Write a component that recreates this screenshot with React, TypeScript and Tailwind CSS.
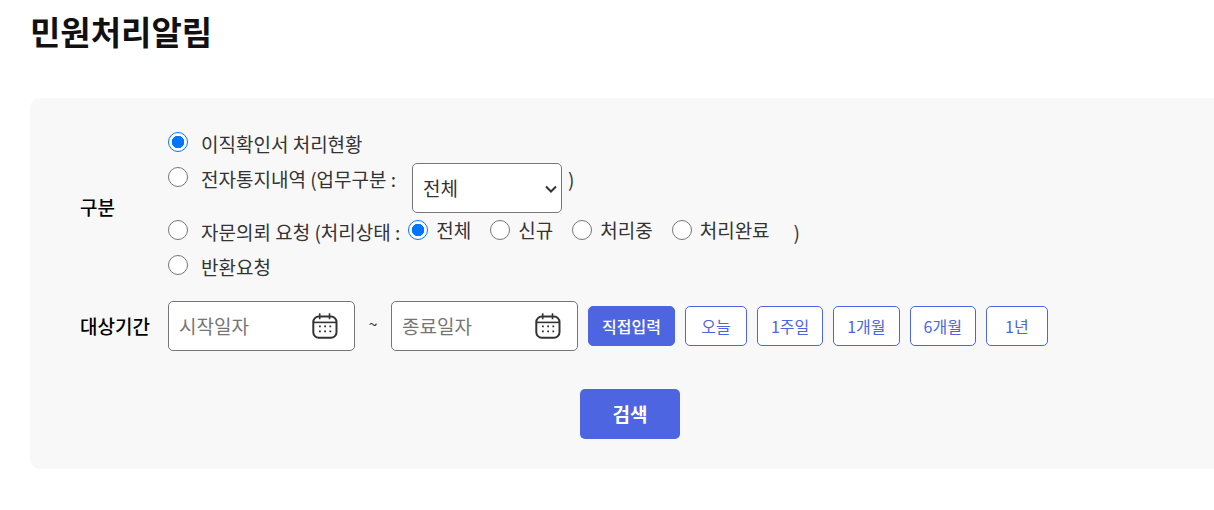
import React, { useState } from 'react'

/** 업무구분 목록 */
const TASK_TYPES = ['전체']

/** 처리상태 목록 */
const STATUSES = ['전체', '신규', '처리중', '처리완료']

/** 대상기간 빠른 선택 목록 */
const PERIODS = ['직접입력', '오늘', '1주일', '1개월', '6개월', '1년']

const radioClass =
  "appearance-none shrink-0 size-5 rounded-full border border-[#767676] bg-white checked:border-[#0075ff] checked:bg-[radial-gradient(circle,#0075ff_6px,#ffffff_6.5px)]"

interface KindRadioProps {
  id: string
  label: string
  value: string
  onChange: (id: string) => void
}

/** 구분 라디오 버튼 + 라벨 */
const KindRadio: React.FC<KindRadioProps> = ({ id, label, value, onChange }) => (
  <>
    <div className="flex h-[34px] items-center">
      <input
        type="radio"
        name="kind"
        id={id}
        checked={value === id}
        onChange={() => onChange(id)}
        className={radioClass}
      />
    </div>
    <label htmlFor={id} className="ml-[13px] h-[35px] pt-px leading-[35px] whitespace-nowrap">
      {label}
    </label>
  </>
)

const CalendarIcon: React.FC = () => (
  <svg width="28" height="28" viewBox="0 0 28 28" fill="none" stroke="#333333" strokeWidth="2" aria-hidden="true">
    <rect x="2.3" y="4.5" width="23.2" height="21.2" rx="5.5" />
    <path d="M2.3 10.4H25.5" strokeWidth="1.6" />
    <path d="M8.7 1.2V7.2M18.5 1.2V7.2" strokeWidth="1.6" />
    <g fill="#333333" stroke="none">
      <path d="M8 13.5h1.8v1.8H8zM13.2 13.5H15v1.8h-1.8zM18.4 13.5h1.8v1.8h-1.8zM8 18.5h1.8v1.8H8zM13.2 18.5H15v1.8h-1.8zM18.4 18.5h1.8v1.8h-1.8z" />
    </g>
  </svg>
)

interface DateFieldProps {
  label: string
}

/** 날짜 입력 필드 */
const DateField: React.FC<DateFieldProps> = ({ label }) => (
  <div className="flex h-[50px] w-[187px] items-center rounded-[5px] border border-[#767676] bg-white pr-[15px] pl-[10px]">
    <input
      type="text"
      aria-label={label}
      placeholder={label}
      className="min-w-0 flex-1 bg-transparent outline-none placeholder:text-[#757575]"
    />
    <button type="button" aria-label={`${label} 선택`}>
      <CalendarIcon />
    </button>
  </div>
)

export default function App() {
  const [kind, setKind] = useState('confirm')
  const [status, setStatus] = useState('전체')
  const [period, setPeriod] = useState('직접입력')

  return (
    <main className="overflow-x-hidden pt-[7px] pb-10 pl-[30px] font-['Noto_Sans_CJK_KR',sans-serif] text-[19px] text-[#333333]">
      <h1 className="text-[33px] leading-[48px] font-bold text-[#111111]">민원처리알림</h1>

      <form
        className="mt-[43px] -mr-4 rounded-[10px] bg-[#f8f8f8] px-[50px] pt-[27px] pb-[30px]"
        onSubmit={(e) => e.preventDefault()}
      >
        {/* 구분 */}
        <div className="flex items-center" role="radiogroup" aria-label="구분">
          <div className="w-[88px] shrink-0 pt-1.5 font-medium text-black">구분</div>
          <div>
            <div className="flex">
              <KindRadio id="confirm" label="이직확인서 처리현황" value={kind} onChange={setKind} />
            </div>

            <div className="flex">
              <KindRadio id="notice" label="전자통지내역 (업무구분 :" value={kind} onChange={setKind} />
              <div className="relative mt-[3px] ml-4">
                <select
                  aria-label="업무구분"
                  className="block h-[50px] w-[150px] appearance-none rounded-[5px] border border-[#767676] bg-white px-[10px]"
                >
                  {TASK_TYPES.map((type) => (
                    <option key={type}>{type}</option>
                  ))}
                </select>
                <svg
                  className="pointer-events-none absolute top-5 right-1"
                  width="14"
                  height="12"
                  viewBox="0 0 14 12"
                  fill="none"
                  stroke="#333333"
                  strokeWidth="2"
                  aria-hidden="true"
                >
                  <path d="M2 3.5L7 8.5L12 3.5" />
                </svg>
              </div>
              <span className="ml-[6px] h-[35px] pt-px leading-[35px]">)</span>
            </div>

            <div className="flex">
              <KindRadio id="advice" label="자문의뢰 요청 (처리상태 :" value={kind} onChange={setKind} />
              <div className="ml-2 flex h-[34px] items-center gap-[19px]" role="radiogroup" aria-label="처리상태">
                {STATUSES.map((item) => (
                  <label key={item} className="flex items-center gap-2 leading-[34px] whitespace-nowrap">
                    <input
                      type="radio"
                      name="status"
                      checked={status === item}
                      onChange={() => setStatus(item)}
                      className={radioClass}
                    />
                    {item}
                  </label>
                ))}
              </div>
              <span className="ml-6 h-[35px] pt-px leading-[35px]">)</span>
            </div>

            <div className="flex">
              <KindRadio id="return" label="반환요청" value={kind} onChange={setKind} />
            </div>
          </div>
        </div>

        {/* 대상기간 */}
        <div className="mt-[18px] flex items-center">
          <div className="w-[88px] shrink-0 font-medium text-black">대상기간</div>
          <DateField label="시작일자" />
          <span className="w-9 pb-1.5 text-center text-base">~</span>
          <DateField label="종료일자" />
          <div className="ml-[10px] flex gap-[10px]">
            {PERIODS.map((item) => (
              <button
                key={item}
                type="button"
                onClick={() => setPeriod(item)}
                className={
                  period === item
                    ? 'h-10 min-w-[62px] rounded-[5px] border border-[#4d65e0] bg-[#4d65e0] px-[13px] text-base font-medium whitespace-nowrap text-white'
                    : 'h-10 min-w-[62px] rounded-[5px] border border-[#4d65e0] bg-white px-[13px] text-base whitespace-nowrap text-[#4d65e0]'
                }
              >
                {item}
              </button>
            ))}
          </div>
        </div>

        {/* 검색 버튼 */}
        <div className="mt-[38px] flex justify-center">
          <button type="submit" className="h-[50px] w-[100px] rounded-[5px] bg-[#4d65e0] font-bold text-white">
            검색
          </button>
        </div>
      </form>
    </main>
  )
}
